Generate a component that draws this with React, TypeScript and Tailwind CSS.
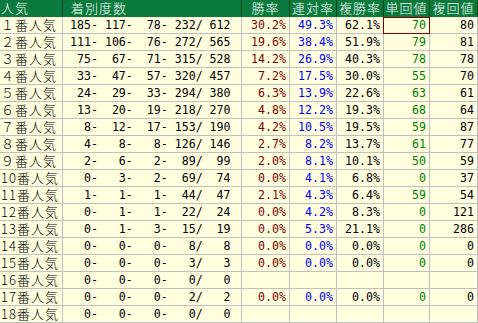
const rows: (string | number)[][] = [
  ["１番人気", 185, 117, 78, 232, 612, "30.2%", "49.3%", "62.1%", "70", "80"],
  ["２番人気", 111, 106, 76, 272, 565, "19.6%", "38.4%", "51.9%", "79", "81"],
  ["３番人気", 75, 67, 71, 315, 528, "14.2%", "26.9%", "40.3%", "78", "78"],
  ["４番人気", 33, 47, 57, 320, 457, "7.2%", "17.5%", "30.0%", "55", "70"],
  ["５番人気", 24, 29, 33, 294, 380, "6.3%", "13.9%", "22.6%", "63", "61"],
  ["６番人気", 13, 20, 19, 218, 270, "4.8%", "12.2%", "19.3%", "68", "64"],
  ["７番人気", 8, 12, 17, 153, 190, "4.2%", "10.5%", "19.5%", "59", "87"],
  ["８番人気", 4, 8, 8, 126, 146, "2.7%", "8.2%", "13.7%", "61", "77"],
  ["９番人気", 2, 6, 2, 89, 99, "2.0%", "8.1%", "10.1%", "50", "59"],
  ["10番人気", 0, 3, 2, 69, 74, "0.0%", "4.1%", "6.8%", "0", "37"],
  ["11番人気", 1, 1, 1, 44, 47, "2.1%", "4.3%", "6.4%", "59", "54"],
  ["12番人気", 0, 1, 1, 22, 24, "0.0%", "4.2%", "8.3%", "0", "121"],
  ["13番人気", 0, 1, 3, 15, 19, "0.0%", "5.3%", "21.1%", "0", "286"],
  ["14番人気", 0, 0, 0, 8, 8, "0.0%", "0.0%", "0.0%", "0", "0"],
  ["15番人気", 0, 0, 0, 3, 3, "0.0%", "0.0%", "0.0%", "0", "0"],
  ["16番人気", 0, 0, 0, 0, 0, "", "", "", "", ""],
  ["17番人気", 0, 0, 0, 2, 2, "0.0%", "0.0%", "0.0%", "0", "0"],
  ["18番人気", 0, 0, 0, 0, 0, "", "", "", "", ""],
];

const pad = (n: string | number, w: number) => String(n).padStart(w, " ");

const cols = "grid grid-cols-[63px_179px_48px_47px_47px_46px_48px]";
const jp = "font-['Noto_Sans_CJK_JP',sans-serif] text-[13px] tracking-[1px] font-light";
const mono = "font-['DejaVu_Sans_Mono','Liberation_Mono',monospace] text-[11.6px] whitespace-pre";

export default function App() {
  const heads = ["勝率", "連対率", "複勝率", "単回値", "複回値"];
  const colors = ["text-[#800000]", "text-[#0000ff]", "text-black", "text-[#008000]", "text-black"];

  return (
    <div className="w-[478px] h-[323px] bg-white overflow-hidden">
      <div className={`${cols} h-[17px] bg-[#0a7a3c] text-white leading-[16px] ${jp}`}>
        <div className="overflow-hidden border-r border-b border-r-[#00451f] border-b-[#0a7a3c] pl-px">人気</div>
        <div className="overflow-hidden border-r border-b border-r-[#00451f] border-b-[#0a7a3c] pl-2">着別度数</div>
        {heads.map((h) => (
          <div key={h} className="overflow-hidden border-r border-b border-r-[#00451f] border-b-[#0a7a3c] text-center">
            {h}
          </div>
        ))}
      </div>
      {rows.map((r, i) => (
        <div key={i} className={`${cols} h-[17px] bg-[#ffffe0]`}>
          <div className={`overflow-hidden border-r border-b border-[#c0c0c0] pl-px leading-[16px] text-black ${jp}`}>
            {r[0]}
          </div>
          <div className={`overflow-hidden border-r border-b border-[#c0c0c0] pl-[7px] leading-[16px] text-black ${mono}`}>
            {`${pad(r[1], 3)}-${pad(r[2], 4)}-${pad(r[3], 4)}-${pad(r[4], 4)}/${pad(r[5], 4)}`}
          </div>
          {[6, 7, 8, 9, 10].map((k, j) => (
            <div
              key={k}
              className={`relative border-r border-b border-[#c0c0c0] pr-[3px] text-right leading-[16px] ${mono} ${colors[j]}`}
            >
              {r[k]}
              {i === 0 && k === 9 && (
                <div className="absolute -left-px -right-px top-0 -bottom-px border border-[#800000]" />
              )}
            </div>
          ))}
        </div>
      ))}
    </div>
  );
}
